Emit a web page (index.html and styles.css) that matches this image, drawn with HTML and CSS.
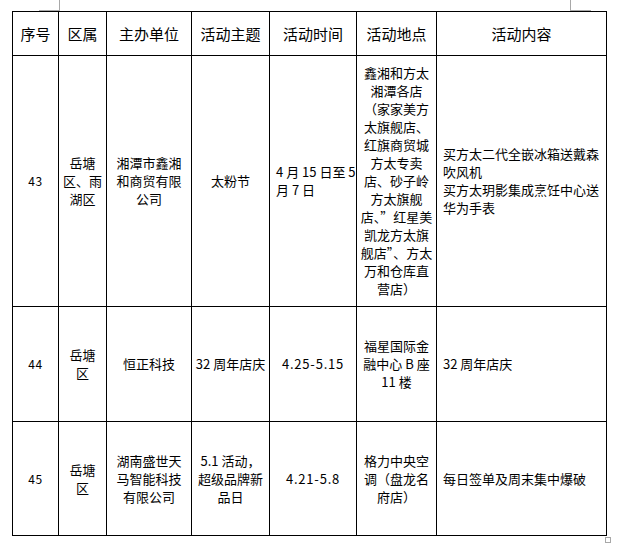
FILE: index.html
```html
<!DOCTYPE html>
<html lang="zh-CN">
<head>
<meta charset="utf-8">
<title>活动表</title>
<link rel="stylesheet" href="styles.css">
</head>
<body>
<div class="page">
  <span class="mark mark-tl-v"></span>
  <span class="mark mark-tl-h"></span>
  <span class="mark mark-tr-v"></span>
  <span class="mark mark-tr-h"></span>
  <span class="mark mark-br"></span>
  <table class="grid">
    <colgroup>
      <col class="c-no"><col class="c-area"><col class="c-host"><col class="c-theme"><col class="c-time"><col class="c-place"><col class="c-content">
    </colgroup>
    <thead>
      <tr class="row-head">
        <th>序号</th><th>区属</th><th>主办单位</th><th>活动主题</th><th>活动时间</th><th>活动地点</th><th>活动内容</th>
      </tr>
    </thead>
    <tbody>
      <tr class="row-43">
        <td class="num">43</td>
        <td>岳塘<br>区、雨<br>湖区</td>
        <td>湘潭市鑫湘<br>和商贸有限<br>公司</td>
        <td>太粉节</td>
        <td class="left">4 月 15 日至 5<br>月 7 日</td>
        <td>鑫湘和方太<br>湘潭各店<br>（家家美方<br>太旗舰店、<br>红旗商贸城<br>方太专卖<br>店、砂子岭<br>方太旗舰<br>店、”红星美<br>凯龙方太旗<br>舰店”、方太<br>万和仓库直<br>营店）</td>
        <td class="left">买方太二代全嵌冰箱送戴森<br>吹风机<br>买方太玥影集成烹饪中心送<br>华为手表</td>
      </tr>
      <tr class="row-44">
        <td class="num">44</td>
        <td>岳塘<br>区</td>
        <td>恒正科技</td>
        <td>32 周年店庆</td>
        <td class="range">4.25-5.15</td>
        <td>福星国际金<br>融中心 B 座<br>11 楼</td>
        <td class="left">32 周年店庆</td>
      </tr>
      <tr class="row-45">
        <td class="num">45</td>
        <td>岳塘<br>区</td>
        <td>湖南盛世天<br>马智能科技<br>有限公司</td>
        <td>5.1 活动，<br>超级品牌新<br>品日</td>
        <td class="range">4.21-5.8</td>
        <td>格力中央空<br>调（盘龙名<br>府店）</td>
        <td class="left">每日签单及周末集中爆破</td>
      </tr>
    </tbody>
  </table>
</div>
</body>
</html>
```

FILE: styles.css
```css
html, body {
  margin: 0;
  padding: 0;
  background: #ffffff;
}

body {
  width: 617px;
  height: 544px;
  overflow: hidden;
  font-family: "Noto Sans CJK SC", "Noto Sans", sans-serif;
  color: #000;
}

.page {
  position: relative;
  width: 617px;
  height: 544px;
  padding: 11px 0 0 12px;
  box-sizing: border-box;
}

.mark {
  position: absolute;
  background: #a8a8a8;
}
.mark-tl-v { left: 59px; top: 0; width: 1px; height: 11px; }
.mark-tl-h { left: 39px; top: 10px; width: 21px; height: 1px; }
.mark-tr-v { left: 570px; top: 0; width: 1px; height: 11px; }
.mark-tr-h { left: 570px; top: 10px; width: 21px; height: 1px; }
.mark-br {
  left: 605px;
  top: 537px;
  width: 4px;
  height: 4px;
  background: transparent;
  border: 1px solid #a8a8a8;
}

.grid {
  border-collapse: collapse;
  table-layout: fixed;
  width: 595px;
}

.c-no { width: 46px; }
.c-area { width: 48px; }
.c-host { width: 85px; }
.c-theme { width: 78px; }
.c-time { width: 87px; }
.c-place { width: 80px; }
.c-content { width: 170px; }

.grid th,
.grid td {
  border: 1px solid #000;
  padding: 0 3px;
  text-align: center;
  vertical-align: middle;
  white-space: nowrap;
  overflow: hidden;
}

.grid th {
  font-size: 15px;
  font-weight: normal;
  line-height: 20px;
}

.grid td {
  font-size: 13px;
  line-height: 18px;
}

.grid td.num {
  font-size: 12px;
  letter-spacing: 0.5px;
}

.grid td.range {
  letter-spacing: 0.8px;
}

.grid td.left {
  text-align: left;
  padding-left: 6px;
}

.row-head th { height: 43px; }
.row-43 td { height: 250px; }
.row-44 td { height: 114px; }
.row-45 td { height: 113px; }
```
